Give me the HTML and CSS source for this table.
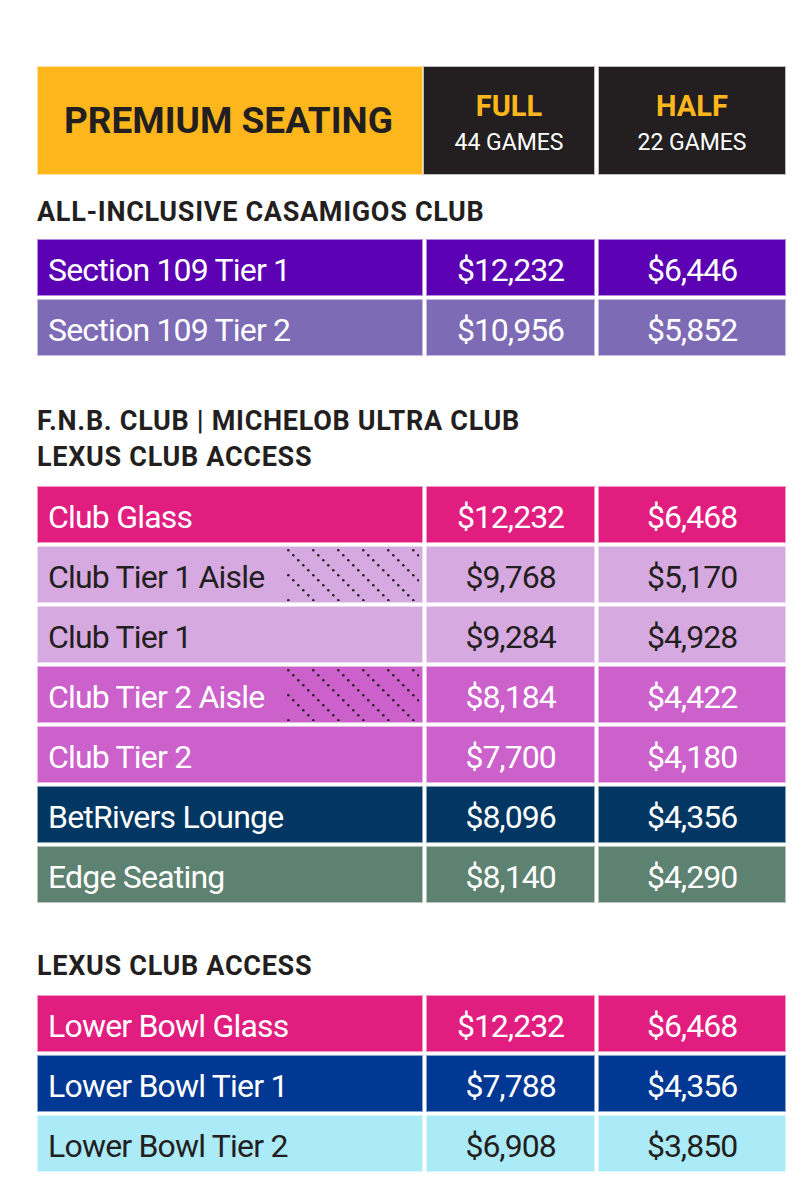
FILE: index.html
```html
<!DOCTYPE html>
<html lang="en">
<head>
<meta charset="utf-8">
<title>Premium Seating</title>
<link rel="stylesheet" href="styles.css">
</head>
<body>
<div class="sheet">
  <div class="head">
    <div class="h-title">PREMIUM SEATING</div>
    <div class="h-col"><span class="h-plan">FULL</span><span class="h-games">44 GAMES</span></div>
    <div class="h-col h-half"><span class="h-plan">HALF</span><span class="h-games">22 GAMES</span></div>
  </div>

  <h2 class="sec sec-1">ALL-INCLUSIVE CASAMIGOS CLUB</h2>
  <div class="rows">
    <div class="row c-purple"><div class="cell name">Section 109 Tier 1</div><div class="cell">$12,232</div><div class="cell">$6,446</div></div>
    <div class="row c-lavender"><div class="cell name">Section 109 Tier 2</div><div class="cell">$10,956</div><div class="cell">$5,852</div></div>
  </div>

  <h2 class="sec sec-2">F.N.B. CLUB | MICHELOB ULTRA CLUB<br>LEXUS CLUB ACCESS</h2>
  <div class="rows">
    <div class="row c-pink"><div class="cell name">Club Glass</div><div class="cell">$12,232</div><div class="cell">$6,468</div></div>
    <div class="row c-lilac dark-text"><div class="cell name">Club Tier 1 Aisle
      <svg class="hatch" width="132" height="52" viewBox="0 0 132 52" aria-hidden="true"><defs><pattern id="dots-a" width="25" height="25" patternUnits="userSpaceOnUse"><circle cx="1.3" cy="1.3" r="1.3"/><circle cx="6.3" cy="6.3" r="1.3"/><circle cx="11.3" cy="11.3" r="1.3"/><circle cx="16.3" cy="16.3" r="1.3"/><circle cx="21.3" cy="21.3" r="1.3"/></pattern></defs><rect width="132" height="52" fill="url(#dots-a)"/></svg>
    </div><div class="cell">$9,768</div><div class="cell">$5,170</div></div>
    <div class="row c-lilac dark-text"><div class="cell name">Club Tier 1</div><div class="cell">$9,284</div><div class="cell">$4,928</div></div>
    <div class="row c-orchid"><div class="cell name">Club Tier 2 Aisle
      <svg class="hatch" width="132" height="52" viewBox="0 0 132 52" aria-hidden="true"><defs><pattern id="dots-b" width="25" height="25" patternUnits="userSpaceOnUse"><circle cx="1.3" cy="1.3" r="1.3"/><circle cx="6.3" cy="6.3" r="1.3"/><circle cx="11.3" cy="11.3" r="1.3"/><circle cx="16.3" cy="16.3" r="1.3"/><circle cx="21.3" cy="21.3" r="1.3"/></pattern></defs><rect width="132" height="52" fill="url(#dots-b)"/></svg>
    </div><div class="cell">$8,184</div><div class="cell">$4,422</div></div>
    <div class="row c-orchid"><div class="cell name">Club Tier 2</div><div class="cell">$7,700</div><div class="cell">$4,180</div></div>
    <div class="row c-navy"><div class="cell name">BetRivers Lounge</div><div class="cell">$8,096</div><div class="cell">$4,356</div></div>
    <div class="row c-sage"><div class="cell name">Edge Seating</div><div class="cell">$8,140</div><div class="cell">$4,290</div></div>
  </div>

  <h2 class="sec sec-3">LEXUS CLUB ACCESS</h2>
  <div class="rows">
    <div class="row c-pink"><div class="cell name">Lower Bowl Glass</div><div class="cell">$12,232</div><div class="cell">$6,468</div></div>
    <div class="row c-blue"><div class="cell name">Lower Bowl Tier 1</div><div class="cell">$7,788</div><div class="cell">$4,356</div></div>
    <div class="row c-sky dark-text"><div class="cell name">Lower Bowl Tier 2</div><div class="cell">$6,908</div><div class="cell">$3,850</div></div>
  </div>
</div>
</body>
</html>
```

FILE: styles.css
```css
* { box-sizing: border-box; }

html, body {
  margin: 0;
  padding: 0;
  background: #ffffff;
}

body {
  font-family: Roboto, "Liberation Sans", sans-serif;
  color: #231f20;
}

.sheet {
  width: 749px;
  margin: 66px 0 0 37px;
}

/* Header */
.head {
  display: grid;
  grid-template-columns: 386px 172px 191px;
  height: 109px;
}

.h-title {
  background: #fdb71c;
  border: 1px solid rgba(255, 255, 255, 0.6);
  display: flex;
  align-items: center;
  padding-left: 26px;
  font-weight: 700;
  font-size: 37px;
  color: #231f20;
}

.h-col {
  background: #231f20;
  border: 1px solid rgba(255, 255, 255, 0.7);
  display: flex;
  flex-direction: column;
  align-items: center;
  justify-content: center;
  padding-top: 4px;
}

.h-half { margin-left: 3px; }

.h-plan {
  font-weight: 700;
  font-size: 29px;
  line-height: 33px;
  color: #fdb71c;
}

.h-games {
  font-size: 23px;
  line-height: 27px;
  margin-top: 6px;
  color: #ffffff;
}

/* Section headings */
.sec {
  margin: 0;
  font-weight: 700;
  font-size: 27px;
  line-height: 36px;
  letter-spacing: 0.7px;
  color: #231f20;
}

.sec-1 { margin-top: 19px; margin-bottom: 9px; }
.sec-2 { margin-top: 47px; margin-bottom: 11px; }
.sec-3 { margin-top: 45px; margin-bottom: 11px; }

/* Rows */
.rows {
  display: flex;
  flex-direction: column;
  gap: 3px;
}

.row {
  display: grid;
  grid-template-columns: 386px 169px 188px;
  column-gap: 3px;
  height: 57px;
  color: #ffffff;
}

.cell {
  background: var(--bg);
  border: 1px solid rgba(255, 255, 255, 0.55);
  display: flex;
  align-items: center;
  justify-content: center;
  padding-top: 4px;
  font-size: 32px;
  letter-spacing: -1px;
}

.cell.name {
  justify-content: flex-start;
  padding-left: 10px;
  letter-spacing: -0.8px;
  position: relative;
}

.hatch {
  position: absolute;
  left: 249px;
  top: 2px;
  fill: #231f20;
}

.dark-text { color: #231f20; }

.c-purple   { --bg: #5b00b3; }
.c-lavender { --bg: #7d6bb6; }
.c-pink     { --bg: #e21d80; }
.c-lilac    { --bg: #d7a9e1; }
.c-orchid   { --bg: #cc61cc; }
.c-navy     { --bg: #023764; }
.c-sage     { --bg: #5e8272; }
.c-blue     { --bg: #003893; }
.c-sky      { --bg: #abeaf7; }
```
